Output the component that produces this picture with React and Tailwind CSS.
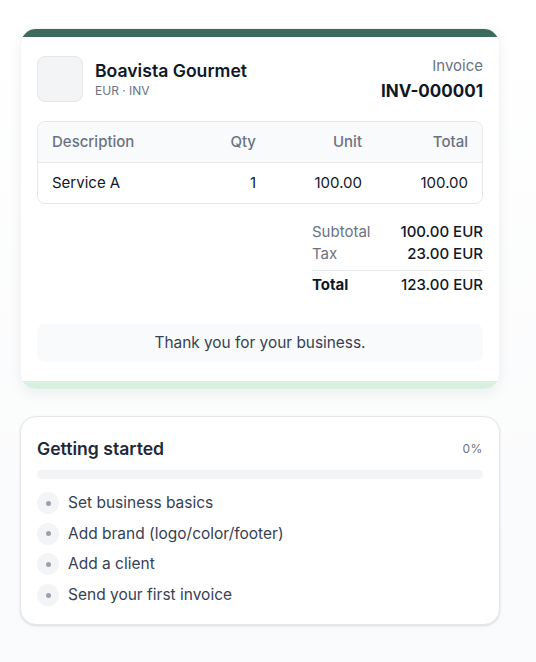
const items = [
  { desc: "Service A", qty: "1", unit: "100.00", total: "100.00" },
];

const steps = [
  "Set business basics",
  "Add brand (logo/color/footer)",
  "Add a client",
  "Send your first invoice",
];

const InvoicePreview = () => {
  return (
    <div className="overflow-hidden rounded-2xl border border-gray-100 bg-white shadow-[0_4px_14px_rgba(0,0,0,0.06)]">
      <div className="h-2 bg-[#3d6b59]" />

      <div className="px-4 pb-[19px] pt-[19px]">
        <div className="flex items-start justify-between">
          <div className="flex items-center gap-3">
            <div className="h-[46px] w-[46px] rounded-lg border border-gray-200 bg-gray-100" />
            <div>
              <div className="text-[17.6px] font-semibold leading-6 text-gray-900">
                Boavista Gourmet
              </div>
              <div className="text-xs leading-4 text-gray-500">EUR · INV</div>
            </div>
          </div>
          <div className="text-right">
            <div className="text-[15px] leading-[20px] text-gray-500">Invoice</div>
            <div className="mt-[3px] text-[17px] font-bold leading-6 text-gray-900">
              INV-000001
            </div>
          </div>
        </div>

        <div className="mt-[18px] overflow-hidden rounded-lg border border-gray-200 text-[15px]">
          <div className="grid grid-cols-[1fr_105px_105px_105px] border-b border-gray-200 bg-gray-50 px-[14px] py-[10px] font-medium leading-5 text-gray-500">
            <div>Description</div>
            <div className="pr-[2px] text-right">Qty</div>
            <div className="pr-px text-right">Unit</div>
            <div className="text-right">Total</div>
          </div>
          {items.map((item) => (
            <div
              key={item.desc}
              className="grid grid-cols-[1fr_105px_105px_105px] px-[14px] py-[10px] leading-5 text-gray-900"
            >
              <div>{item.desc}</div>
              <div className="pr-[2px] text-right">{item.qty}</div>
              <div className="pr-px text-right">{item.unit}</div>
              <div className="text-right">{item.total}</div>
            </div>
          ))}
        </div>

        <div className="mt-[17px] flex justify-end">
          <div className="w-[171px] text-[15px] leading-[22px]">
            <div className="flex justify-between">
              <span className="text-gray-500">Subtotal</span>
              <span className="font-medium text-gray-900">100.00 EUR</span>
            </div>
            <div className="flex justify-between">
              <span className="text-gray-500">Tax</span>
              <span className="font-medium text-gray-900">23.00 EUR</span>
            </div>
            <div className="mt-[5px] flex justify-between border-t border-gray-200 pt-[3px] text-gray-900">
              <span className="font-bold">Total</span>
              <span className="font-medium">123.00 EUR</span>
            </div>
          </div>
        </div>

        <div className="mt-7 rounded-lg bg-gray-50 py-[9px] text-center text-[15.4px] leading-5 text-gray-700">
          Thank you for your business.
        </div>
      </div>

      <div className="h-2 bg-[#d9efdf]" />
    </div>
  );
};

const GettingStarted = () => {
  return (
    <div className="rounded-2xl border border-gray-200 bg-white px-4 pb-[18px] pt-5 shadow-sm">
      <div className="flex items-center justify-between">
        <h3 className="text-[17.6px] font-semibold leading-6 text-gray-800">
          Getting started
        </h3>
        <span className="text-xs tracking-wider text-gray-500">0%</span>
      </div>
      <div className="mt-[9px] h-[9px] rounded-full bg-gray-100" />
      <div className="mt-[13px] flex flex-col gap-[8.7px]">
        {steps.map((step) => (
          <div key={step} className="flex items-center gap-[9px]">
            <span className="flex h-[22px] w-[22px] items-center justify-center rounded-full bg-gray-100">
              <span className="h-[5px] w-[5px] rounded-full bg-gray-400" />
            </span>
            <span className="text-[15.5px] leading-[22px] text-gray-700">{step}</span>
          </div>
        ))}
      </div>
    </div>
  );
};

const App = () => {
  return (
    <div className="min-h-screen bg-linear-to-b from-white to-gray-50 px-5 pt-7 font-['Inter',sans-serif]">
      <div className="w-[480px]">
        <InvoicePreview />
        <div className="mt-[26px]">
          <GettingStarted />
        </div>
      </div>
    </div>
  );
};

export default App;
